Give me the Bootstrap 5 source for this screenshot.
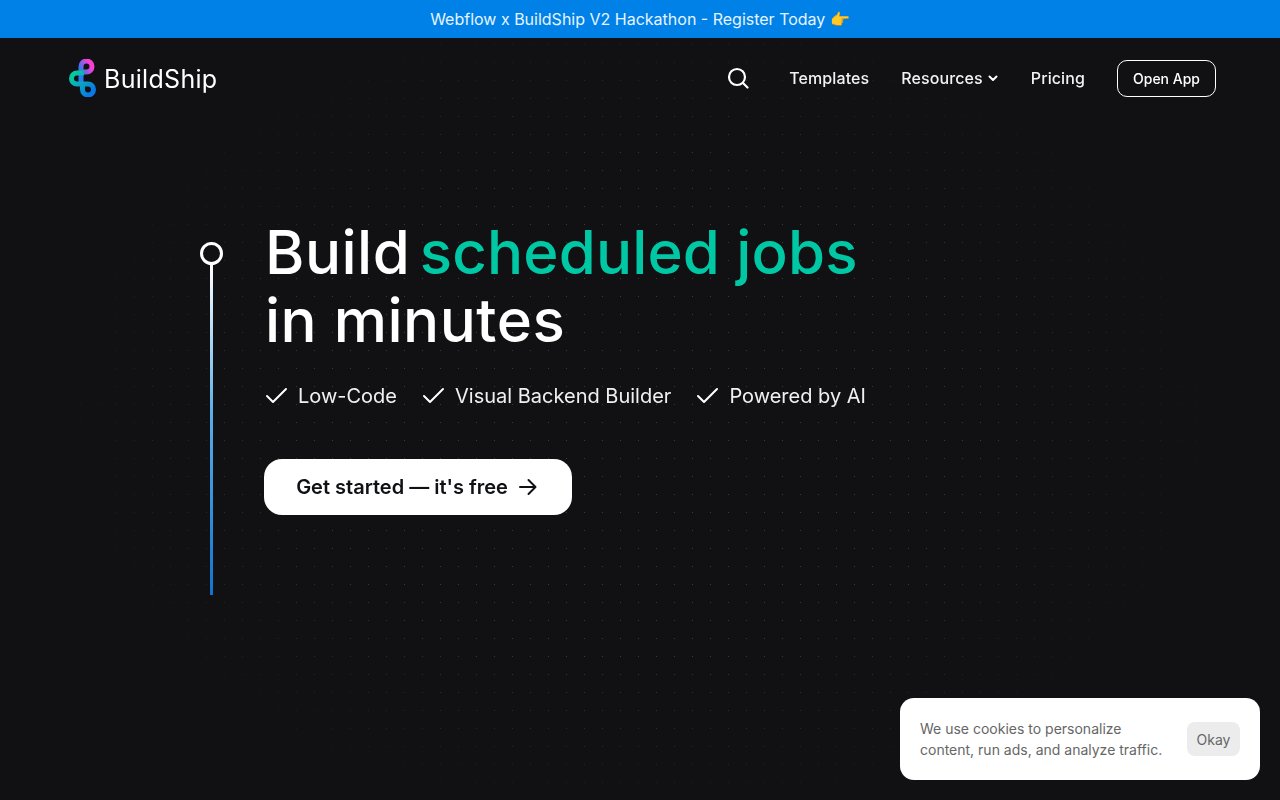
<!DOCTYPE html>
<html>
<head>
  <title>BuildShip</title>
  <link rel="stylesheet" href="https://cdn.jsdelivr.net/npm/bootstrap@5.3.0/dist/css/bootstrap.min.css">
  <script src="https://cdn.jsdelivr.net/npm/bootstrap@5.3.0/dist/js/bootstrap.bundle.min.js"></script>
  <style>
    html, body { height: 100%; }
    body {
      font-family: "Inter", "Liberation Sans", sans-serif;
      color: #fff;
      background-color: #111114;
      overflow: hidden;
    }
    /* faint dot grid behind the page, fades out towards the edges */
    body::before {
      content: "";
      position: fixed;
      inset: 0;
      z-index: -1;
      background-image: radial-gradient(circle at .5px .5px, #3a3b3e .8px, transparent 1px);
      background-size: 18px 18px;
      background-position: 8px 8px;
      -webkit-mask-image: radial-gradient(ellipse 620px 440px at 50% 52%, #000 55%, transparent 100%);
      mask-image: radial-gradient(ellipse 620px 440px at 50% 52%, #000 55%, transparent 100%);
    }
    .promo-bar { height: 38px; background: #0081e8; color: #e6f4ff; font-size: 16px; }
    .top-nav { height: 80px; padding: 0 64px 0 69px; }
    .brand-name { font-family: "Inter", sans-serif; font-size: 25px; font-weight: 400; color: #fff; letter-spacing: .3px; line-height: 1; padding-top: 2px; }
    .nav-text { color: #f2f2f2; font-size: 16px; font-weight: 500; letter-spacing: .1px; text-decoration: none; margin-left: 32px; }
    .search-icon { margin-right: 8px; }
    .open-btn {
      color: #fff; font-size: 14px; font-weight: 500; width: 99px; height: 37px; padding: 0;
      border: 1px solid #fff; border-radius: 10px; margin-left: 32px;
    }
    .hero { padding: 124px 0 0 200px; }
    .time-dot { width: 23px; height: 23px; border: 3px solid #fff; border-radius: 50%; }
    .time-line { width: 3px; height: 330px; background: linear-gradient(180deg, #fff 0%, #5aaee8 45%, #1273cf 100%); }
    .hero-body { margin: -24px 0 0 41px; }
    .hero-title { font-family: "Inter", sans-serif; font-size: 60px; font-weight: 500; line-height: 68px; letter-spacing: .5px; margin: 0; padding-left: 1px; }
    .hero-accent { color: #00c8a5; letter-spacing: .15px; margin-left: -7px; }
    .feature-row { font-size: 20px; line-height: 24px; color: #f0f0f0; margin-top: 30px; gap: 24px; }
    .feature-item { gap: 10px; }
    .cta-btn {
      width: 308px; height: 56px; margin-top: 51px; padding: 0; background: #fff; color: #101114;
      border: 0; border-radius: 18px; font-size: 20px; font-weight: 600;
    }
    .cta-btn:hover { background: #fff; color: #101114; }
    .cookie-box {
      position: fixed; left: 900px; top: 698px; width: 360px; height: 82px;
      background: #fff; border-radius: 14px; padding: 0 20px; color: #666;
      font-size: 14px; line-height: 21px;
    }
    .okay-btn { width: 53px; height: 34px; padding: 0; background: #ececec; color: #666; border: 0; border-radius: 8px; font-size: 14px; }
  </style>
</head>
<body>
  <div class="promo-bar d-flex align-items-center justify-content-center">Webflow x BuildShip V2 Hackathon - Register Today 👉</div>

  <nav class="top-nav d-flex align-items-center justify-content-between">
    <a href="#" class="d-flex align-items-center gap-2 text-decoration-none">
      <svg width="27" height="38" viewBox="0 0 27 38" fill="none">
        <defs>
          <linearGradient id="logoA" x1="0" y1="1" x2="1" y2="0">
            <stop offset=".25" stop-color="#2a7cf0"/><stop offset=".8" stop-color="#f53fd6"/>
          </linearGradient>
          <linearGradient id="logoB" x1="0" y1="0" x2="1" y2="1">
            <stop offset=".1" stop-color="#07c8a0"/><stop offset=".9" stop-color="#0a78e8"/>
          </linearGradient>
        </defs>
        <path d="M12 24V7.5a5.5 5.5 0 1 1 5.5 5.5H13" stroke="url(#logoA)" stroke-width="5"/>
        <path d="M15 14H8a5.5 5.5 0 0 0 0 11h11a5.5 5.5 0 1 1-5.5 5.5V25" stroke="url(#logoB)" stroke-width="5"/>
      </svg>
      <span class="brand-name">BuildShip</span>
    </a>
    <div class="d-flex align-items-center">
      <svg class="search-icon" width="22" height="22" viewBox="0 0 22 22" fill="none" stroke="#fff" stroke-width="2.2" stroke-linecap="round">
        <circle cx="10" cy="10" r="8"/><path d="M16 16l4.5 4.5"/>
      </svg>
      <a href="#" class="nav-text">Templates</a>
      <a href="#" class="nav-text d-flex align-items-center gap-1">Resources
        <svg width="12" height="12" viewBox="0 0 12 12" fill="none" stroke="#fff" stroke-width="2" stroke-linecap="round" stroke-linejoin="round"><path d="M2.5 4.5L6 8l3.5-3.5"/></svg>
      </a>
      <a href="#" class="nav-text">Pricing</a>
      <button class="btn open-btn">Open App</button>
    </div>
  </nav>

  <section class="hero d-flex">
    <div class="d-flex flex-column align-items-center">
      <div class="time-dot"></div>
      <div class="time-line"></div>
    </div>
    <div class="hero-body">
      <h1 class="hero-title">Build <span class="hero-accent">scheduled jobs</span><br>in minutes</h1>
      <div class="feature-row d-flex">
        <span class="feature-item d-flex align-items-center">
          <svg width="24" height="24" viewBox="0 0 24 24" fill="none" stroke="#fff" stroke-width="2" stroke-linecap="round" stroke-linejoin="round"><path d="M3 12l6 6L22 5"/></svg>Low-Code</span>
        <span class="feature-item d-flex align-items-center">
          <svg width="24" height="24" viewBox="0 0 24 24" fill="none" stroke="#fff" stroke-width="2" stroke-linecap="round" stroke-linejoin="round"><path d="M3 12l6 6L22 5"/></svg>Visual Backend Builder</span>
        <span class="feature-item d-flex align-items-center">
          <svg width="24" height="24" viewBox="0 0 24 24" fill="none" stroke="#fff" stroke-width="2" stroke-linecap="round" stroke-linejoin="round"><path d="M3 12l6 6L22 5"/></svg>Powered by AI</span>
      </div>
      <button class="btn cta-btn d-flex align-items-center justify-content-center gap-2">Get started — it's free
        <svg width="24" height="24" viewBox="0 0 24 24" fill="none" stroke="#101114" stroke-width="2" stroke-linecap="round" stroke-linejoin="round"><path d="M4 12h15M12.5 5l7 7-7 7"/></svg>
      </button>
    </div>
  </section>

  <div class="cookie-box d-flex align-items-center justify-content-between">
    <span>We use cookies to personalize<br>content, run ads, and analyze traffic.</span>
    <button class="btn okay-btn">Okay</button>
  </div>
</body>
</html>
